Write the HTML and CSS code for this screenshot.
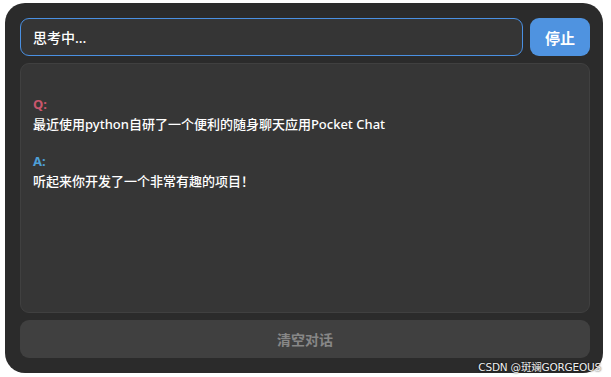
FILE: index.html
```html
<!DOCTYPE html>
<html lang="zh-CN">

<head>
    <meta charset="UTF-8">
    <meta name="viewport" content="width=device-width, initial-scale=1.0">
    <title>Pocket Chat</title>
    <link rel="stylesheet" href="styles.css">
</head>

<body>
    <div class="app">
        <!-- Barra de entrada -->
        <div class="top-bar">
            <input type="text" class="prompt-input" value="思考中...">
            <button class="stop-btn">停止</button>
        </div>

        <!-- Conversa -->
        <div class="chat-box">
            <div class="msg">
                <div class="msg-q">Q:</div>
                <div class="msg-text">最近使用python自研了一个便利的随身聊天应用Pocket Chat</div>
            </div>
            <div class="msg">
                <div class="msg-a">A:</div>
                <div class="msg-text">听起来你开发了一个非常有趣的项目！</div>
            </div>
        </div>

        <button class="clear-btn">清空对话</button>
    </div>

    <div class="watermark">CSDN @斑斓GORGEOUS</div>
</body>

</html>
```

FILE: styles.css
```css
/* RESET */
* {
    margin: 0;
    padding: 0;
    box-sizing: border-box;
}

body {
    font-family: 'Segoe UI', 'Noto Sans', 'Noto Sans CJK SC', sans-serif;
    background: #ffffff;
    width: 611px;
    height: 377px;
    padding: 3px 8px 4px 5px;
    position: relative;
    overflow: hidden;
}

/* PAINEL */
.app {
    background: #2b2b2b;
    border-radius: 20px;
    height: 100%;
    padding: 15px 13px 15px 15px;
    display: flex;
    flex-direction: column;
    gap: 7px;
}

.top-bar {
    display: flex;
    gap: 7px;
    height: 38px;
}

.prompt-input {
    flex: 1;
    background: #353535;
    border: 1px solid #4a90e2;
    border-radius: 9px;
    color: #ffffff;
    font-family: inherit;
    font-size: 14px;
    font-weight: 500;
    padding: 0 12px;
    outline: none;
}

.stop-btn {
    width: 60px;
    background: #4f93e0;
    border: none;
    border-radius: 9px;
    color: #ffffff;
    font-family: inherit;
    font-size: 15px;
    font-weight: 700;
}

/* CONVERSA */
.chat-box {
    flex: 1;
    background: #363636;
    border: 1px solid #404040;
    border-radius: 9px;
    padding: 31px 12px;
    display: flex;
    flex-direction: column;
    gap: 18px;
}

.msg {
    font-size: 13px;
    line-height: 19px;
    font-weight: 500;
    color: #ffffff;
}

.msg-text {
    margin-top: 1px;
}

.msg-q,
.msg-a {
    font-weight: 700;
}

.msg-q {
    color: #c9566d;
}

.msg-a {
    color: #4e9fd6;
}

/* LIMPAR */
.clear-btn {
    height: 38px;
    background: #404040;
    border: none;
    border-radius: 9px;
    color: #878787;
    font-family: inherit;
    font-size: 14px;
    font-weight: 700;
}

.watermark {
    position: absolute;
    right: 10px;
    bottom: 3px;
    font-family: 'DejaVu Sans', 'Noto Sans CJK SC', sans-serif;
    font-size: 10.5px;
    letter-spacing: -0.2px;
    color: #f0f0f0;
    text-shadow: 0 0 2px #000;
}
```
